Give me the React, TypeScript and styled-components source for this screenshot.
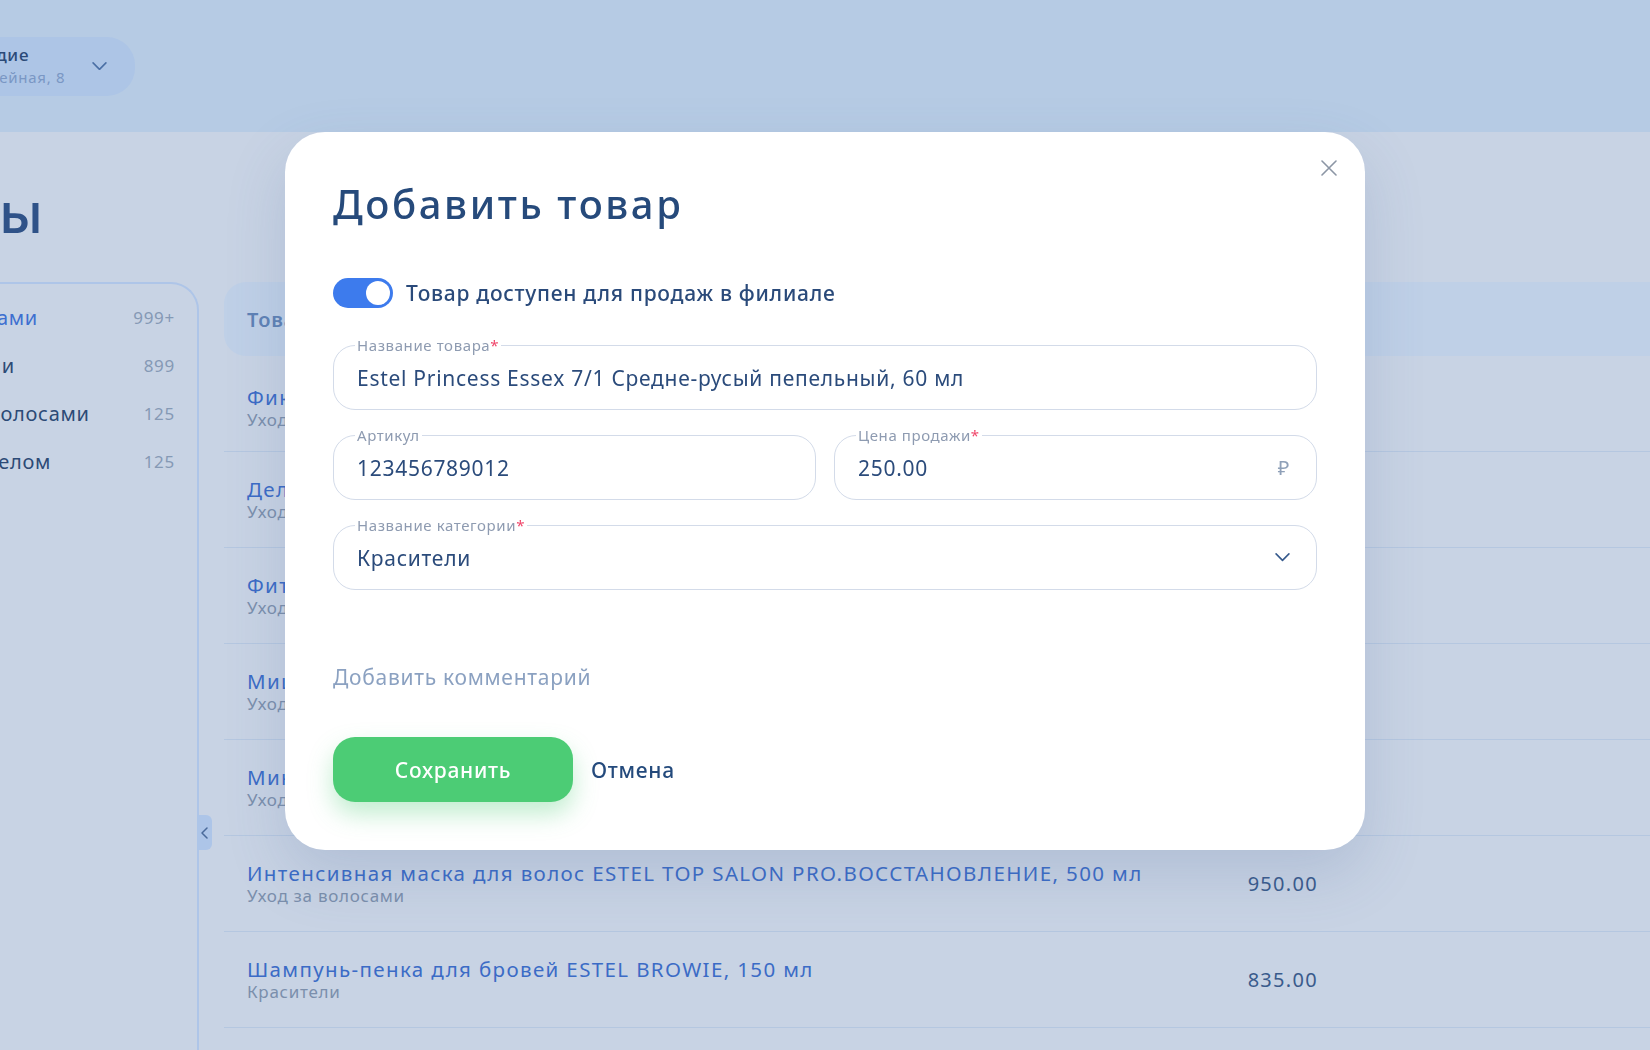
import styled, { createGlobalStyle } from "styled-components";

const GlobalStyle = createGlobalStyle`
  * { box-sizing: border-box; }
  html, body { margin: 0; padding: 0; }
  body {
    width: 1650px;
    height: 1050px;
    overflow: hidden;
    background: #c8d3e4;
    font-family: "Noto Sans", "Open Sans", sans-serif;
    letter-spacing: 0.045em;
  }
`;

const Page = styled.div`
  width: 1650px;
  height: 1050px;
  overflow: hidden;
`;

const TopBar = styled.header`
  height: 132px;
  background: #b6cbe4;
  display: flex;
  align-items: center;
`;

const BranchPill = styled.div`
  margin-left: -76px;
  width: 211px;
  height: 59px;
  border-radius: 28px;
  background: #adc5e6;
  display: flex;
  align-items: center;
  gap: 12px;
  padding: 0 28px 0 20px;
`;

const BranchText = styled.div`
  flex: 1;
  display: flex;
  flex-direction: column;
  gap: 2px;
  white-space: nowrap;
`;

const BranchName = styled.span`
  font-size: 17px;
  line-height: 20px;
  font-weight: 500;
  color: #2b4a78;
`;

const BranchAddress = styled.span`
  font-size: 15px;
  line-height: 20px;
  color: #7a97c4;
`;

const Content = styled.main`
  margin-left: -130px;
  display: flex;
  flex-direction: column;
`;

const PageTitle = styled.h1`
  margin: 51px 0 43px -36px;
  font-size: 56px;
  line-height: 56px;
  font-weight: 500;
  color: #2f5288;
  white-space: nowrap;
`;

const Body = styled.div`
  display: flex;
  gap: 25px;
  margin-right: -30px;
`;

const Sidebar = styled.aside`
  position: relative;
  width: 329px;
  height: 800px;
  flex-shrink: 0;
  border-top: 2px solid #aec5e8;
  border-right: 2px solid #aec5e8;
  border-top-right-radius: 28px;
  padding: 9px 22px 0 36px;
`;

const CategoryItem = styled.div<{ $active?: boolean }>`
  height: 48px;
  display: flex;
  align-items: center;
  justify-content: space-between;
  white-space: nowrap;
  font-size: 20px;
  color: ${(p) => (p.$active ? "#3d6fd0" : "#2c4a76")};
`;

const CategoryCount = styled.span`
  font-size: 17px;
  color: #8599b5;
`;

const CollapseTab = styled.button`
  position: absolute;
  right: -15px;
  top: 531px;
  width: 15px;
  height: 35px;
  border: none;
  padding: 0;
  border-radius: 0 6px 6px 0;
  background: #adc5e8;
  display: flex;
  align-items: center;
  justify-content: center;
`;

const Table = styled.section`
  flex: 1;
  display: flex;
  flex-direction: column;
`;

const TableHead = styled.div`
  height: 74px;
  margin-bottom: 8px;
  border-radius: 22px;
  background: #bfd0e7;
  display: flex;
  align-items: center;
  padding: 0 362px 0 23px;
  font-size: 20px;
  font-weight: 600;
  color: #5f82b5;
`;

const Row = styled.div`
  height: 96px;
  border-bottom: 1.5px solid #b5c7e0;
  display: flex;
  align-items: center;
  padding: 0 362px 0 23px;

  ${TableHead} + & {
    height: 88px;
  }
`;

const NameCell = styled.div`
  flex: 1;
  display: flex;
  flex-direction: column;
  white-space: nowrap;
`;

const ProductName = styled.span`
  font-size: 20.5px;
  line-height: 24px;
  letter-spacing: 0.067em;
  color: #3b6bc6;
`;

const ProductCategory = styled.span`
  font-size: 17px;
  line-height: 22px;
  color: #7b8fac;
`;

const PriceCell = styled.span<{ $head?: boolean }>`
  width: 160px;
  text-align: right;
  font-size: 20px;
  letter-spacing: 0.065em;
  color: ${(p) => (p.$head ? "#5f82b5" : "#3a5b8c")};
`;

const Overlay = styled.div`
  position: fixed;
  inset: 0;
  display: flex;
  justify-content: center;
  align-items: flex-start;
  padding-top: 132px;
`;

const Modal = styled.div`
  position: relative;
  width: 1080px;
  background: #ffffff;
  border-radius: 40px;
  padding: 48px 48px 48px;
  box-shadow: 0 24px 60px rgba(70, 100, 150, 0.18);
`;

const CloseButton = styled.button`
  position: absolute;
  top: 28px;
  right: 28px;
  width: 16px;
  height: 16px;
  padding: 0;
  border: none;
  background: none;
  display: flex;
`;

const ModalTitle = styled.h2`
  margin: 0;
  font-size: 40px;
  line-height: 48px;
  font-weight: 500;
  letter-spacing: 0.065em;
  color: #264a7b;
`;

const ToggleRow = styled.label`
  margin-top: 50px;
  height: 30px;
  display: flex;
  align-items: center;
  gap: 13px;
  font-size: 21px;
  font-weight: 500;
  color: #2a4a7a;
`;

const Switch = styled.span<{ $on?: boolean }>`
  width: 60px;
  height: 30px;
  border-radius: 15px;
  background: ${(p) => (p.$on ? "#3d7bed" : "#c9d3e2")};
  display: flex;
  align-items: center;
  justify-content: ${(p) => (p.$on ? "flex-end" : "flex-start")};
  padding: 0 3px;
`;

const Knob = styled.span`
  width: 24px;
  height: 24px;
  border-radius: 50%;
  background: #ffffff;
`;

const FormGrid = styled.div`
  margin-top: 37px;
  display: grid;
  grid-template-columns: 1fr 1fr;
  column-gap: 18px;
  row-gap: 25px;
`;

const FieldBox = styled.div<{ $wide?: boolean }>`
  position: relative;
  grid-column: ${(p) => (p.$wide ? "1 / -1" : "auto")};
  height: 65px;
  border: 1.5px solid #d3dbe9;
  border-radius: 22px;
  display: flex;
  align-items: center;
  padding: 0 26px 0 23px;
`;

const FieldLabel = styled.span`
  position: absolute;
  top: -10px;
  left: 21px;
  padding: 0 2px;
  background: #ffffff;
  font-size: 15px;
  line-height: 18px;
  letter-spacing: 0.04em;
  color: #8e9bb1;
  white-space: nowrap;
`;

const Required = styled.span`
  color: #f0476b;
`;

const FieldValue = styled.span`
  flex: 1;
  font-size: 21px;
  color: #2b4b7b;
  white-space: nowrap;
`;

const Adornment = styled.span`
  font-size: 20px;
  color: #8fa0b8;
  display: flex;
  align-items: center;
`;

const CommentLink = styled.button`
  margin-top: 74px;
  padding: 0;
  border: none;
  background: none;
  font-family: inherit;
  letter-spacing: inherit;
  font-size: 21px;
  line-height: 26px;
  color: #8ba1c1;
  text-align: left;
  display: block;
`;

const Actions = styled.div`
  margin-top: 47px;
  display: flex;
  align-items: center;
  gap: 18px;
`;

const SaveButton = styled.button`
  width: 240px;
  height: 65px;
  border: none;
  border-radius: 22px;
  background: #4ccc75;
  box-shadow: 0 12px 24px rgba(76, 204, 117, 0.35);
  font-family: inherit;
  letter-spacing: inherit;
  font-size: 21px;
  font-weight: 500;
  color: #ffffff;
`;

const CancelButton = styled.button`
  padding: 0;
  border: none;
  background: none;
  font-family: inherit;
  letter-spacing: inherit;
  font-size: 21px;
  font-weight: 500;
  color: #244a7c;
`;

type FieldProps = {
  label: string;
  value: string;
  required?: boolean;
  wide?: boolean;
  adornment?: React.ReactNode;
};

function Field({ label, value, required, wide, adornment }: FieldProps) {
  return (
    <FieldBox $wide={wide}>
      <FieldLabel>
        {label}
        {required && <Required>*</Required>}
      </FieldLabel>
      <FieldValue>{value}</FieldValue>
      {adornment && <Adornment>{adornment}</Adornment>}
    </FieldBox>
  );
}

const ChevronDown = ({ color = "#35598c", w = 15 }: { color?: string; w?: number }) => (
  <svg width={w} height={w * 0.55} viewBox="0 0 16 9" fill="none">
    <path d="M1 1l7 7 7-7" stroke={color} strokeWidth="1.7" strokeLinecap="round" strokeLinejoin="round" />
  </svg>
);

const categories = [
  { name: "Со скидками", count: "999+", active: true },
  { name: "Красители", count: "899" },
  { name: "Уход за волосами", count: "125" },
  { name: "Уход за телом", count: "125" },
];

const products = [
  { name: "Фиксирующий спрей для волос ESTEL AIREX, 400 мл", category: "Уход за волосами", price: "640.00" },
  { name: "Деликатный шампунь ESTEL OTIUM AQUA, 250 мл", category: "Уход за волосами", price: "720.00" },
  { name: "Фитоспрей для кожи головы ESTEL CUREX, 100 мл", category: "Уход за волосами", price: "410.00" },
  { name: "Мицеллярный шампунь ESTEL PRIMA BLONDE, 250 мл", category: "Уход за волосами", price: "560.00" },
  { name: "Минеральный бальзам ESTEL CUREX THERAPY, 200 мл", category: "Уход за волосами", price: "480.00" },
  { name: "Интенсивная маска для волос ESTEL TOP SALON PRO.ВОССТАНОВЛЕНИЕ, 500 мл", category: "Уход за волосами", price: "950.00" },
  { name: "Шампунь-пенка для бровей ESTEL BROWIE, 150 мл", category: "Красители", price: "835.00" },
  { name: "Краска-уход ESTEL DE LUXE 8/0, 60 мл", category: "Красители", price: "390.00" },
];

export default function App() {
  return (
    <Page>
      <GlobalStyle />
      <TopBar>
        <BranchPill>
          <BranchText>
            <BranchName>Рапсодие</BranchName>
            <BranchAddress>ул. Литейная, 8</BranchAddress>
          </BranchText>
          <ChevronDown color="#4a6fa5" w={15} />
        </BranchPill>
      </TopBar>

      <Content>
        <PageTitle>Товары</PageTitle>
        <Body>
          <Sidebar>
            {categories.map((c) => (
              <CategoryItem key={c.name} $active={c.active}>
                <span>{c.name}</span>
                <CategoryCount>{c.count}</CategoryCount>
              </CategoryItem>
            ))}
            <CollapseTab>
              <svg width="7" height="12" viewBox="0 0 7 12" fill="none">
                <path d="M6 1L1 6l5 5" stroke="#4a6a9a" strokeWidth="1.5" strokeLinecap="round" strokeLinejoin="round" />
              </svg>
            </CollapseTab>
          </Sidebar>

          <Table>
            <TableHead>
              <NameCell>Товар</NameCell>
              <PriceCell $head>Цена</PriceCell>
            </TableHead>
            {products.map((p) => (
              <Row key={p.name}>
                <NameCell>
                  <ProductName>{p.name}</ProductName>
                  <ProductCategory>{p.category}</ProductCategory>
                </NameCell>
                <PriceCell>{p.price}</PriceCell>
              </Row>
            ))}
          </Table>
        </Body>
      </Content>

      <Overlay>
        <Modal>
          <CloseButton aria-label="Закрыть">
            <svg width="16" height="16" viewBox="0 0 16 16" fill="none">
              <path d="M1 1l14 14M15 1L1 15" stroke="#8c96a5" strokeWidth="1.6" strokeLinecap="round" />
            </svg>
          </CloseButton>
          <ModalTitle>Добавить товар</ModalTitle>

          <ToggleRow>
            <Switch $on>
              <Knob />
            </Switch>
            Товар доступен для продаж в филиале
          </ToggleRow>

          <FormGrid>
            <Field wide required label="Название товара" value="Estel Princess Essex 7/1 Средне-русый пепельный, 60 мл" />
            <Field label="Артикул" value="123456789012" />
            <Field required label="Цена продажи" value="250.00" adornment="₽" />
            <Field wide required label="Название категории" value="Красители" adornment={<ChevronDown />} />
          </FormGrid>

          <CommentLink>Добавить комментарий</CommentLink>

          <Actions>
            <SaveButton>Сохранить</SaveButton>
            <CancelButton>Отмена</CancelButton>
          </Actions>
        </Modal>
      </Overlay>
    </Page>
  );
}
